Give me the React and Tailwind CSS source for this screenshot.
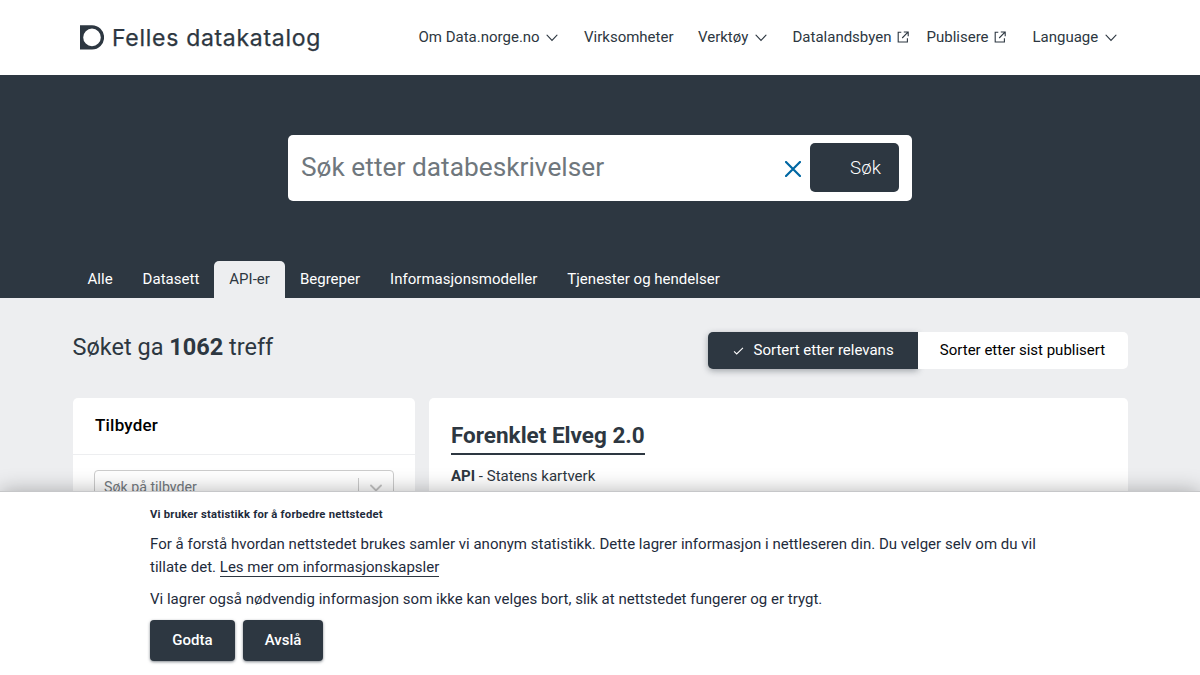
import React from "react";

function ChevronDown({ className }) {
  return (
    <svg viewBox="0 0 12 8" fill="none" stroke="currentColor" strokeWidth="1.1" className={className}>
      <path d="M1 1.2 6 6.4 11 1.2" strokeLinecap="round" />
    </svg>
  );
}

function External({ className }) {
  return (
    <svg viewBox="0 0 12 12" fill="none" stroke="currentColor" strokeWidth="1.1" className={className}>
      <path d="M4.3 1.3H1.2v9.7h9.2V7.2" />
      <path d="M6.8 1H11.2V5.2M11 1.2 5.2 7" />
    </svg>
  );
}

const nav = [
  { label: "Om Data.norge.no", icon: "down", width: "w-[165.5px]" },
  { label: "Virksomheter", width: "w-[114px]" },
  { label: "Verktøy", icon: "down", width: "w-[94.5px]" },
  { label: "Datalandsbyen", icon: "external", width: "w-[134px]" },
  { label: "Publisere", icon: "external", width: "w-[106px]" },
  { label: "Language", icon: "down", width: "w-[90px]" },
];

const tabs = ["Alle", "Datasett", "API-er", "Begreper", "Informasjonsmodeller", "Tjenester og hendelser"];

function Header() {
  return (
    <header className="flex h-[75px] items-center bg-white pl-20">
      <div className="flex w-[338.5px] items-center text-[#2d3741]">
        <svg viewBox="0 0 24 25" className="h-[25px] w-6 shrink-0">
          <path
            fill="currentColor"
            fillRule="evenodd"
            d="M0 .3h12a12.1 12.1 0 0 1 0 24.2H0ZM12 3.6a8.8 8.8 0 1 0 0 17.6 8.8 8.8 0 0 0 0-17.6Z"
          />
        </svg>
        <span className="ml-[8px] mt-px whitespace-nowrap font-[family-name:Inter,sans-serif] text-[23px] leading-[30px] tracking-[0.7px] [-webkit-text-stroke:0.25px_#2d3741]">
          Felles datakatalog
        </span>
      </div>
      <nav className="mb-px flex text-[15px] leading-[22px]">
        {nav.map((n) => (
          <a key={n.label} className={"flex shrink-0 items-center whitespace-nowrap " + n.width}>
            {n.label}
            {n.icon === "down" && <ChevronDown className="ml-[6.5px] mt-[2px] h-2 w-3" />}
            {n.icon === "external" && <External className="ml-[5.5px] h-3 w-3" />}
          </a>
        ))}
      </nav>
    </header>
  );
}

function Hero() {
  return (
    <section className="flex h-[223px] flex-col items-center bg-[#2d3741] pt-[60px]">
      <div className="flex h-[65.5px] w-[624px] items-center rounded-[5px] bg-white pl-[13px] pr-[13px]">
        <span className="flex-1 pb-px text-[26.25px] leading-8 tracking-[0.02px] text-[#6f777d]">Søk etter databeskrivelser</span>
        <svg viewBox="0 0 16 16" className="mr-[9px] mt-[2px] h-4 w-4 text-[#0067a3]" fill="none" stroke="currentColor" strokeWidth="2.2">
          <path d="m1 1 14 14M15 1 1 15" strokeLinecap="round" />
        </svg>
        <button className="h-[49px] w-[89px] rounded-[5px] bg-[#2d3741] pl-[22px] text-[18.75px] font-light text-white">
          Søk
        </button>
      </div>
      <div className="mt-auto flex w-[1055px] text-[15px] leading-[37px] text-white">
        {tabs.map((t) => (
          <a
            key={t}
            className={
              t === "API-er"
                ? "h-[37px] rounded-t-[5px] bg-[#edeef0] px-[15px] tracking-[0.01px] text-[#2d3741]"
                : "h-[37px] px-[15px] tracking-[0.015px]"
            }
          >
            {t}
          </a>
        ))}
      </div>
    </section>
  );
}

function Results() {
  return (
    <main className="mx-auto w-[1055px] pt-[34px]">
      <div className="flex justify-between">
        <h1 className="text-[23.5px] leading-[31px]">
          Søket ga <b>1062</b> treff
        </h1>
        <div className="flex h-[37px] text-[15px]">
          <button className="flex w-[210px] items-center rounded-l-[5px] bg-[#2d3741] pl-[25px] text-white shadow-[0_2px_6px_rgba(45,55,65,0.4)]">
            <svg viewBox="0 0 12 9" className="mr-[10px] mt-px h-2 w-[11px]" fill="none" stroke="currentColor" strokeWidth="1.2">
              <path d="m1 4.8 3 3L11 1" />
            </svg>
            Sortert etter relevans
          </button>
          <button className="w-[210px] rounded-r-[5px] bg-white text-black">Sorter etter sist publisert</button>
        </div>
      </div>
      <div className="mt-[28.5px] flex gap-[14px]">
        <aside className="h-[300px] w-[342px] rounded-[5px] bg-white">
          <h2 className="h-[57px] border-b border-[#edeef0] pl-[22.5px] text-[17px] font-medium leading-[54px] tracking-[0.2px] text-black">
            Tilbyder
          </h2>
          <div className="ml-[21px] mt-[15px] flex h-9 w-[300px] items-center rounded-[4px] border border-[#cccccc] pl-[9.5px] text-[14.2px] text-[#747a80]">
            <span className="flex-1">Søk på tilbyder</span>
            <span className="h-5 w-px bg-[#cccccc]" />
            <svg viewBox="0 0 12 8" className="mx-[11px] h-2 w-3 text-[#c4c4c4]" fill="none" stroke="currentColor" strokeWidth="1.8">
              <path d="m1 1.5 5 5 5-5" strokeLinecap="round" />
            </svg>
          </div>
        </aside>
        <article className="h-[300px] flex-1 rounded-[5px] bg-white pl-[22.5px] pt-[21.5px]">
          <h2 className="w-fit border-b-2 border-[#2d3741] pb-[2px] text-[22.5px] font-bold leading-[32px]">Forenklet Elveg 2.0</h2>
          <p className="mt-[9.5px] text-[15px] leading-[22px]">
            <b>API</b> - Statens kartverk
          </p>
        </article>
      </div>
    </main>
  );
}

function CookieBanner() {
  return (
    <div className="absolute inset-x-0 bottom-0 h-[184px] border-t border-[#c6c7c9] bg-white pl-[150px] pt-[15px] text-[#1e2b3c] shadow-[0_0_20px_rgba(0,0,0,0.3)]">
      <h3 className="text-[11.25px] font-bold leading-4 tracking-[0.22px]">Vi bruker statistikk for å forbedre nettstedet</h3>
      <p className="mt-[10px] w-[900px] text-[15px] leading-[22.5px] tracking-[0.014px]">
        For å forstå hvordan nettstedet brukes samler vi anonym statistikk. Dette lagrer informasjon i nettleseren din. Du velger selv om du vil tillate det.{" "}
        <a className="inline-block border-b border-[#2d3741] leading-[18px] tracking-normal">Les mer om informasjonskapsler</a>
      </p>
      <p className="mt-[10px] text-[15px] leading-[22.5px] tracking-[0.014px]">
        Vi lagrer også nødvendig informasjon som ikke kan velges bort, slik at nettstedet fungerer og er trygt.
      </p>
      <div className="mt-[9px] flex gap-2 text-[15px] font-medium text-white">
        <button className="h-[41px] w-[85px] rounded-[4px] bg-[#2d3741] shadow-[0_1px_3px_rgba(45,55,65,0.6)]">Godta</button>
        <button className="h-[41px] w-[80px] rounded-[4px] bg-[#2d3741] shadow-[0_1px_3px_rgba(45,55,65,0.6)]">Avslå</button>
      </div>
    </div>
  );
}

export default function App() {
  return (
    <div className="relative h-[675px] w-[1200px] overflow-hidden bg-[#edeef0] font-[Roboto,sans-serif] text-[#2d3741]">
      <Header />
      <Hero />
      <Results />
      <CookieBanner />
    </div>
  );
}
